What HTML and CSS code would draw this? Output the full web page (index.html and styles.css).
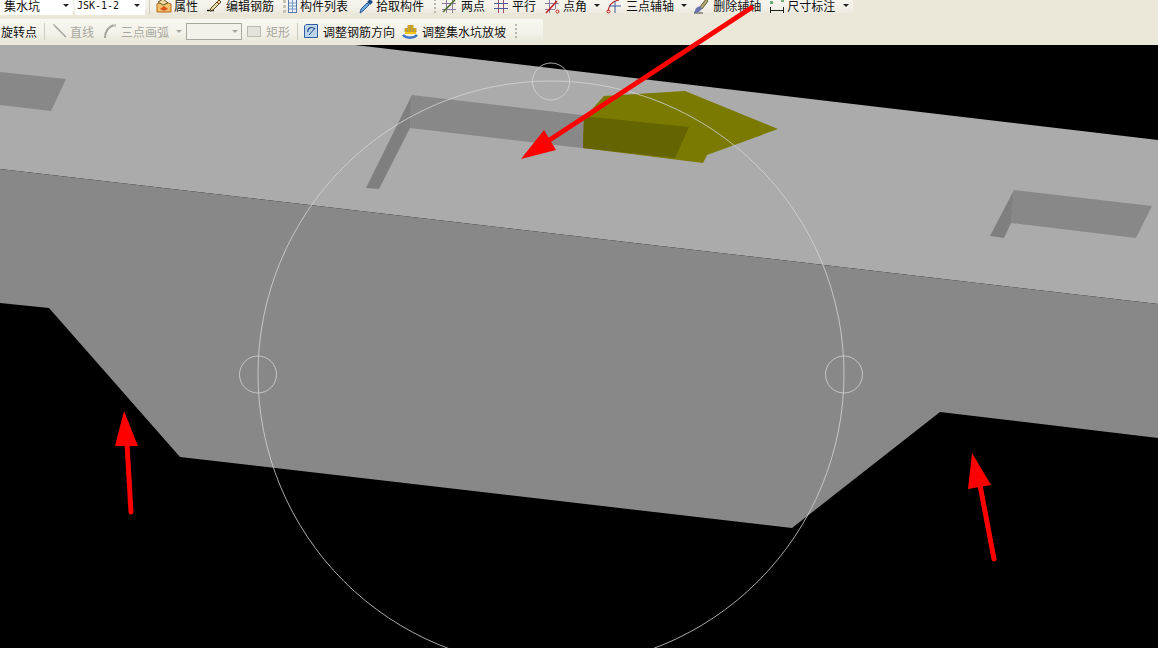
FILE: index.html
```html
<!DOCTYPE html>
<html lang="en">
<head>
<meta charset="UTF-8" />
<title>集水坑</title>
<link rel="stylesheet" href="styles.css">
</head>
<body>

<div class="toolbars">
  <div class="toolbar toolbar-top">
    <div class="combo combo-type"><span>集水坑</span><i class="caret"></i></div>
    <div class="combo combo-name"><span class="mono">JSK-1-2</span><i class="caret"></i></div>
    <i class="sep ml-4"></i>

    <div class="tool ml-6 gap-2">
      <svg width="16" height="16" viewBox="0 0 16 16"><path d="M1 6l6-3 8 3v8H1z" fill="#f4c26a" stroke="#b5651d"/><path d="M2 4l5-3 5 4-5 2z" fill="#e9d8a0" stroke="#6b5a2a"/><path d="M4 11l4-3 4 3-4 2z" fill="#d9541e"/></svg>
      属性
    </div>
    <div class="tool gap-4">
      <svg width="16" height="16" viewBox="0 0 16 16"><path d="M1 12.500h7" stroke="#222" stroke-width="1.500"/><path d="M5 10L13 2l2 2-8 8-3 1z" fill="#e8d9a8" stroke="#5a4a20"/><path d="M11 4l2 2" stroke="#b03020"/></svg>
      编辑钢筋
    </div>
    <div class="tool gap-2">
      <svg width="16" height="16" viewBox="0 0 16 16"><path d="M1 2h3v3H1zM1 7h3v3H1zM1 12h3v3H1z" fill="#c6c3b2"/><rect x="6.500" y="1.500" width="8" height="13" fill="#eaf1fa" stroke="#5578a8"/><path d="M7 5h7M7 8h7M7 11h7M10.500 2v12" stroke="#7c9ac4"/></svg>
      构件列表
    </div>
    <div class="tool ml-10 gap-2">
      <svg width="16" height="16" viewBox="0 0 16 16"><path d="M2 15l1-4 6-6 2 2-6 6z" fill="#6fa8dc" stroke="#2f5f9a"/><path d="M9 4l3-3 3 3-3 3z" fill="#1f4e86"/></svg>
      拾取构件
    </div>
    <i class="grip ml-10"></i>

    <div class="tool ml-5 gap-4">
      <svg width="16" height="16" viewBox="0 0 16 16"><path d="M5.500 1v14M11.500 1v14M1 5.500h14M1 11.500h14" stroke="#8a7aa0"/><path d="M2 14L14 2" stroke="#4a6a2a" stroke-width="1.500"/></svg>
      两点
    </div>
    <div class="tool">
      <svg width="16" height="16" viewBox="0 0 16 16"><path d="M5.500 1v14M10.500 1v14" stroke="#a04a6a"/><path d="M1 5.500h14M1 10.500h14" stroke="#4a5aa0"/></svg>
      平行
    </div>
    <div class="tool">
      <svg width="16" height="16" viewBox="0 0 16 16"><path d="M5.500 1v14M11.500 1v10M1 5.500h14M1 11.500h10" stroke="#8a7aa0"/><path d="M2 15L13 3" stroke="#c02020" stroke-width="1.500"/><circle cx="13.500" cy="13.500" r="1.500" fill="none" stroke="#d02020"/></svg>
      点角
    </div>
    <i class="caret caret-dark ml-7"></i>
    <div class="tool ml-6 gap-4">
      <svg width="16" height="16" viewBox="0 0 16 16"><path d="M2 13C3 7 7 3 13 2" fill="none" stroke="#c83030" stroke-width="1.200"/><path d="M9 3v12M3 8h12" stroke="#3a5a9a"/><circle cx="2.500" cy="13.500" r="1.500" fill="none" stroke="#d02020"/></svg>
      三点辅轴
    </div>
    <i class="caret caret-dark ml-7"></i>
    <div class="tool ml-6 gap-4">
      <svg width="16" height="16" viewBox="0 0 16 16"><path d="M7 9l6-8 2 2-6 8z" fill="#b8a070" stroke="#5a6a3a"/><path d="M3 10l4-2 2 3-3 3-5 1z" fill="#6a74b0"/><path d="M1 15h9" stroke="#444"/></svg>
      删除辅轴
    </div>
    <div class="tool gap-2">
      <svg width="16" height="16" viewBox="0 0 16 16"><path d="M1.500 9v6M14.500 9v6M2 12.500h12" stroke="#222"/><path d="M1 3h3v3H1zM12 1h3v3h-3z" fill="#6fb07a"/></svg>
      尺寸标注
    </div>
    <i class="caret caret-dark ml-8"></i>
  </div>

  <div class="toolbar toolbar-bottom">
    <div class="tool ml-1">旋转点</div>
    <i class="sep ml-7"></i>
    <div class="tool ml-7 gap-2 is-off">
      <svg width="16" height="16" viewBox="0 0 16 16"><path d="M2 2l12 12" stroke="#a5a49a" stroke-width="1.500"/><path d="M1 1h2v2H1z" fill="#c9c8bc"/></svg>
      直线
    </div>
    <div class="tool is-off">
      <svg width="16" height="16" viewBox="0 0 16 16"><path d="M3 15C3 9 6 4 12 2" fill="none" stroke="#a5a49a" stroke-width="2"/><path d="M11 1h3v3h-3z" fill="#c9c8bc"/></svg>
      三点画弧
    </div>
    <i class="caret ml-7"></i>
    <div class="select-off ml-4"><i class="caret"></i></div>
    <div class="tool ml-4 gap-4 is-off">
      <svg width="16" height="16" viewBox="0 0 16 16"><rect x="1.500" y="3.500" width="13" height="10" fill="#e4e3da" stroke="#bdbcb2"/></svg>
      矩形
    </div>
    <i class="sep ml-7"></i>
    <div class="tool ml-5 gap-4">
      <svg width="16" height="16" viewBox="0 0 16 16"><path d="M3 1.500h11.500V14.500H1.500V3z" fill="#bcd4ee" stroke="#2f5f9f"/><path d="M5 9c-1-4 4-6 7-3" fill="none" stroke="#1f4e86" stroke-width="1.200"/><path d="M6 12l6-7" stroke="#1f4e86"/></svg>
      调整钢筋方向
    </div>
    <div class="tool ml-7 gap-4">
      <svg width="16" height="16" viewBox="0 0 16 16"><path d="M1 12c3 3.500 11 3.500 14 0" fill="none" stroke="#3f74c4" stroke-width="2.500"/><path d="M4 9V5M7 9V2M10 9V2M13 9V5" stroke="#7a5a10" stroke-width="2.600"/><path d="M4 10V5M7 10V2M10 10V2M13 10V5" stroke="#f5c518" stroke-width="1.400"/><path d="M3 9h11v2H3z" fill="#f5c518"/></svg>
      调整集水坑放坡
    </div>
    <i class="grip ml-9"></i>
  </div>
</div>

<svg class="scene" width="1158" height="603" viewBox="0 45 1158 603">
  <!-- slab -->
  <polygon class="face-top" points="0,45 355,45 1158,140 1158,304 0,169" />
  <polygon class="face-front" points="0,169 1158,304 1158,438 940,412 792,528 180,457 49,308 0,303" />

  <!-- openings in the top face -->
  <polygon class="face-front" points="0,72 66,79 51,111 0,105" />
  <polygon class="face-front" points="412,95 590,116 590,149 410,128" />
  <polygon class="face-side" points="412,95 410,128 379,189 366,188" />
  <polygon class="face-front" points="1014,190 1152,206 1136,238 1011,223" />
  <polygon class="face-side" points="1014,190 1011,223 1004,238 990,236" />

  <!-- sump -->
  <polygon class="sump-light" points="604,96 685,91 778,129 707,155 703,163 583,148 584,118" />
  <polygon class="sump-dark" points="584,117 592,117 689,127 675,158 583,148" />

  <!-- rotate handle -->
  <g class="handle">
    <circle cx="551" cy="374" r="293" />
    <circle cx="551" cy="81.500" r="18.500" />
    <circle cx="258" cy="374.500" r="18.500" />
    <circle cx="844" cy="374.500" r="18.500" />
  </g>

  <!-- arrows -->
  <g class="arrow">
    <line x1="751" y1="8" x2="548" y2="141" />
    <polygon points="521,159 544,130 556,150" />
    <line x1="131" y1="512" x2="127" y2="444" />
    <polygon points="124,411 115,446 138,446" />
    <line x1="994" y1="559" x2="980" y2="485" />
    <polygon points="972,453 968,489 991,485" />
  </g>
</svg>

</body>
</html>
```

FILE: styles.css
```css
html, body {
  margin: 0;
  padding: 0;
  height: 100%;
  overflow: hidden;
  background: #000;
}
body {
  font-family: "Noto Sans CJK SC", "Noto Sans", sans-serif;
  font-size: 12px;
  color: #111;
}
.toolbars {
  display: flow-root;
  height: 45px;
  background: #ebe8da;
}
.toolbar {
  display: flex;
  align-items: center;
  width: max-content;
  background: linear-gradient(#f8f7f1, #f3f1e8 60%, #e9e6d8);
}
.toolbar-top {
  height: 19px;
  margin-top: -4px;
  margin-bottom: 4px;
  padding-right: 4px;
}
.toolbar-bottom {
  height: 24px;
  padding-right: 26px;
}
.tool {
  display: flex;
  align-items: center;
  gap: 3px;
  margin-left: 8px;
  white-space: nowrap;
}
.tool svg {
  flex: none;
}
.is-off {
  color: #a8a79d;
}
.gap-2 { gap: 2px; }
.gap-4 { gap: 4px; }
.tool.ml-1 { margin-left: 1px; }
.ml-4, .tool.ml-4 { margin-left: 4px; }
.ml-5, .tool.ml-5 { margin-left: 5px; }
.ml-6, .tool.ml-6 { margin-left: 6px; }
.ml-7, .tool.ml-7 { margin-left: 7px; }
.ml-8 { margin-left: 8px; }
.ml-9 { margin-left: 9px; }
.ml-10, .tool.ml-10 { margin-left: 10px; }

.combo {
  display: flex;
  align-items: center;
  justify-content: space-between;
  height: 19px;
  box-sizing: border-box;
  background: #fff;
}
.combo-type {
  width: 73px;
  padding: 0 4px 0 4px;
}
.combo-name {
  width: 70px;
  margin-left: 2px;
  padding: 0 5px 0 2px;
}
.mono {
  font-family: "DejaVu Sans Mono", monospace;
  font-size: 10px;
}
.caret {
  display: block;
  flex: none;
  width: 0;
  height: 0;
  border-left: 3px solid transparent;
  border-right: 3px solid transparent;
  border-top: 3px solid #a8a79d;
}
.combo .caret, .caret-dark {
  border-top-color: #222;
}
.select-off .caret {
  border-top-color: #a8a79d;
}
.sep {
  display: block;
  flex: none;
  width: 1px;
  height: 17px;
  background: #cfccbd;
}
.grip {
  display: block;
  flex: none;
  width: 2px;
  height: 14px;
  background: repeating-linear-gradient(#b8b6a8 0 2px, transparent 2px 4px);
}
.select-off {
  display: flex;
  align-items: center;
  justify-content: flex-end;
  width: 56px;
  height: 17px;
  box-sizing: border-box;
  padding-right: 3px;
  background: #f3f2ea;
  border: 1px solid #a9a89e;
}

.scene {
  display: block;
  position: relative;
  overflow: visible;
}
.face-top { fill: #ababab; }
.face-front { fill: #888; }
.face-side { fill: #7f7f7f; }
.sump-light { fill: #7a7a00; }
.sump-dark { fill: #646400; }
.handle circle {
  fill: none;
  stroke: #d4d4d4;
  stroke-width: 0.8;
}
.arrow line {
  stroke: #ff0000;
  stroke-width: 5;
  stroke-linecap: round;
}
.arrow polygon {
  fill: #ff0000;
}
```
